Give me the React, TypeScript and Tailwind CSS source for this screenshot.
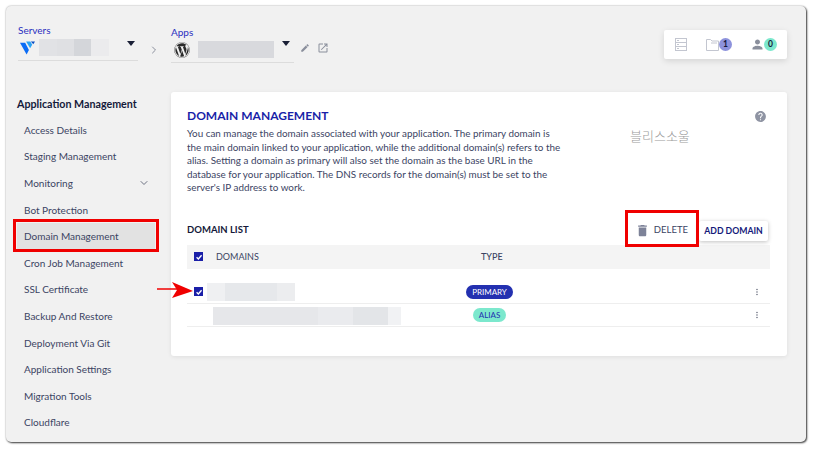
import { ChevronDown, ChevronRight } from 'lucide-react';
import { FaWordpress } from 'react-icons/fa';
import { MdDelete, MdEdit, MdHelp, MdMoreVert, MdOpenInNew, MdPerson } from 'react-icons/md';

const menu = [
  'Access Details',
  'Staging Management',
  'Monitoring',
  'Bot Protection',
  'Domain Management',
  'Cron Job Management',
  'SSL Certificate',
  'Backup And Restore',
  'Deployment Via Git',
  'Application Settings',
  'Migration Tools',
  'Cloudflare',
];

function Blur({ parts, height }: { parts: [number, string][]; height: string }) {
  return (
    <div className={`flex ${height}`}>
      {parts.map(([w, color], i) => (
        <div key={i} style={{ width: w, backgroundColor: color }} />
      ))}
    </div>
  );
}

function Check() {
  return (
    <div className="flex h-[9px] w-[9px] shrink-0 items-center justify-center bg-[#1a1fa8]">
      <svg viewBox="0 0 10 10" className="h-[8px] w-[8px]">
        <path d="M2 5.2 4.2 7.4 8.2 2.8" fill="none" stroke="#fff" strokeWidth="1.7" />
      </svg>
    </div>
  );
}

export default function App() {
  return (
    <div className="relative h-[450px] w-[814px] overflow-hidden bg-white pl-[6px] pt-[6px] font-['Lato',sans-serif] text-[#3b4463]">
      <div className="flex h-[436px] w-[800px] flex-col rounded-[5px] bg-[#f1f1f1] shadow-[1px_1px_2px_rgba(0,0,0,0.75),0_0_2px_rgba(0,0,0,0.3)]">
        {/* Top bar */}
        <div className="flex h-[86px] shrink-0 pl-[12px] pr-[19px]">
          <div className="mt-[18px] flex h-[37px] w-[120px] flex-col border-b border-[#dcdcdc]">
            <span className="text-[10px] leading-[12px] text-[#2a2fc0]">Servers</span>
            <div className="mt-[3px] flex items-start">
              <svg viewBox="0 0 16 14" className="ml-[2px] mt-[2px] h-[14px] w-[15px]">
                <path d="M0 1.5h5.5l4 7.5L7 14z" fill="#0a6cf5" />
                <path d="M6.5 0h4.5l2 3.5-2.2 3.8z" fill="#2aa3f5" />
                <path d="M11.5 0H16l-1.8 3z" fill="#0a4fc5" />
              </svg>
              <div className="ml-[4px]">
                <Blur height="h-[17px]" parts={[[18, '#e1e2e5'], [17, '#dfe0e3'], [17, '#d4d6da'], [18, '#ebebed']]} />
              </div>
              <div className="ml-[18px] mt-[2px] h-0 w-0 border-x-[4px] border-t-[5px] border-x-transparent border-t-[#1a2036]" />
            </div>
          </div>
          <ChevronRight className="ml-[10px] mt-[38px] h-[12px] w-[12px] text-[#8a8f9c]" />
          <div className="ml-[11px] mt-[20px] flex h-[37px] w-[123px] flex-col border-b border-[#dcdcdc]">
            <span className="text-[10px] leading-[12px] text-[#2a2fc0]">Apps</span>
            <div className="mt-[3px] flex items-start">
              <FaWordpress className="ml-[3px] mt-[1px] h-[16px] w-[16px] text-[#2b2b2b]" />
              <div className="ml-[8px]">
                <Blur height="h-[17px]" parts={[[76, '#d8d9dd']]} />
              </div>
              <div className="ml-[8px] mt-[0px] h-0 w-0 border-x-[4px] border-t-[5px] border-x-transparent border-t-[#1a2036]" />
            </div>
          </div>
          <MdEdit className="ml-[6px] mt-[37px] h-[10px] w-[10px] text-[#8a8f9c]" />
          <MdOpenInNew className="ml-[7px] mt-[36px] h-[12px] w-[12px] text-[#8a8f9c]" />
          <div className="ml-auto mt-[24px] flex h-[29px] w-[123px] items-center rounded-[2px] bg-white pl-[11px] shadow-[0_2px_6px_rgba(0,0,0,0.12)]">
            <svg viewBox="0 0 12 13" className="h-[13px] w-[12px]" fill="none" stroke="#c3c6d0">
              <rect x="0.5" y="0.5" width="11" height="12" />
              <path d="M0.5 4.5h11M0.5 8.5h11M2 2.5h2M2 6.5h2M2 10.5h2" />
            </svg>
            <svg viewBox="0 0 13 12" className="ml-[19px] h-[12px] w-[13px]" fill="none" stroke="#c3c6d0">
              <path d="M.5 11.5V.5h4l1.5 1.5h6.5v9.5zM5 4h6" />
            </svg>
            <div className="flex h-[13px] w-[13px] items-center justify-center rounded-full bg-[#8d92dc] text-[8.5px] font-bold leading-none text-[#15183a]">1</div>
            <MdPerson className="ml-[18px] h-[15px] w-[15px] text-[#8a8f9c]" />
            <div className="-ml-[1px] flex h-[13px] w-[13px] items-center justify-center rounded-full bg-[#7ce8cd] text-[8.5px] font-bold leading-none text-[#15183a]">0</div>
          </div>
        </div>

        {/* Body */}
        <div className="flex flex-1">
          <div className="w-[165px] shrink-0 pl-[11px]">
            <h2 className="mt-[5px] text-[10.7px] font-bold leading-[14px] text-[#14193a]">Application Management</h2>
            <ul className="mt-[6px] w-[138px]">
              {menu.map((item) => (
                <li
                  key={item}
                  className={`flex h-[26.6px] items-center justify-between pl-[7px] pr-[5px] text-[10px] ${item === 'Domain Management' ? 'bg-[#e2e2e2]' : ''}`}
                >
                  {item}
                  {item === 'Monitoring' && <ChevronDown className="h-[12px] w-[12px] text-[#6d7282]" />}
                </li>
              ))}
            </ul>
          </div>

          <div className="h-[264px] w-[616px] rounded-[3px] bg-white pl-[16px] pr-[17px] pt-[16px] shadow-[0_1px_4px_rgba(0,0,0,0.08)]">
            <div className="flex items-start justify-between">
              <div>
                <h1 className="text-[12px] font-bold leading-[15px] text-[#1a1fa8]">DOMAIN MANAGEMENT</h1>
                <p className="mt-[4px] w-[378px] text-[9.9px] leading-[13.5px]">
                  You can manage the domain associated with your application. The primary domain is the main domain linked to your application, while the additional domain(s) refers to the alias. Setting a domain as primary will also set the domain as the base URL in the database for your application. The DNS records for the domain(s) must be set to the server's IP address to work.
                </p>
              </div>
              <MdHelp className="mr-[3px] mt-[2px] h-[13px] w-[13px] text-[#8f94a3]" />
            </div>

            <div className="mt-[23px] flex h-[26px] items-center pr-[2px]">
              <span className="text-[9.5px] font-bold text-[#14193a]">DOMAIN LIST</span>
              <div className="ml-auto flex items-center text-[#3b4463]">
                <MdDelete className="h-[15px] w-[15px] text-[#7d8298]" />
                <span className="ml-[4px] text-[9.5px]">DELETE</span>
              </div>
              <div className="ml-[11px] flex h-[20px] w-[69px] items-center justify-center rounded-[2px] text-[8.7px] font-bold text-[#14197a] shadow-[0_1px_4px_rgba(0,0,0,0.25)]">ADD DOMAIN</div>
            </div>

            <div className="mt-[1px] flex h-[24px] items-center bg-[#f4f4f4] pl-[7px] text-[9px]">
              <Check />
              <span className="ml-[13px] w-[232px]">DOMAINS</span>
              <span className="ml-[33px] font-medium">TYPE</span>
            </div>

            <div className="mt-[12px] flex h-[23px] items-center border-b border-[#eeeeee] pr-[8px]">
              <div className="ml-[7px]"><Check /></div>
              <div className="ml-[4px] w-[252px]">
                <Blur height="h-[18px]" parts={[[18, '#eff0f2'], [52, '#e6e8eb'], [18, '#ecedef']]} />
              </div>
              <div className="ml-[7px] w-[47px] rounded-full bg-[#2330b0] text-center text-[8px] leading-[14px] text-white">PRIMARY</div>
              <MdMoreVert className="ml-auto h-[10px] w-[10px] text-[#6d7282]" />
            </div>
            <div className="flex h-[23px] items-center border-b border-[#eeeeee] pr-[8px]">
              <div className="ml-[26px] mt-[3px] w-[260px]">
                <Blur height="h-[18px]" parts={[[105, '#e6e7ea'], [35, '#eaebee'], [35, '#e3e5e8'], [13, '#f1f2f4']]} />
              </div>
              <div className="w-[33px] rounded-full bg-[#7ce8cd] text-center text-[8px] leading-[14px] text-[#2330b0]">ALIAS</div>
              <MdMoreVert className="ml-auto h-[10px] w-[10px] text-[#6d7282]" />
            </div>
          </div>
        </div>
      </div>

      {/* Annotations drawn over the screenshot */}
      <div className="absolute left-[13px] top-[219px] h-[33px] w-[146px] border-[3px] border-[#f00000]" />
      <div className="absolute left-[625px] top-[210px] h-[37px] w-[74px] border-[3px] border-[#f00000]" />
      <svg viewBox="0 0 36 16" className="absolute left-[157px] top-[282px] h-[16px] w-[36px]">
        <path d="M0 7h22" stroke="#f00000" strokeWidth="1.5" />
        <path d="M15 0 36 9 15 16 20 8z" fill="#f00000" />
      </svg>
      <span className="absolute left-[630px] top-[126px] font-['Noto_Sans_CJK_KR',sans-serif] text-[13px] font-light text-[#9a9a9a]">블리스소울</span>
    </div>
  );
}
